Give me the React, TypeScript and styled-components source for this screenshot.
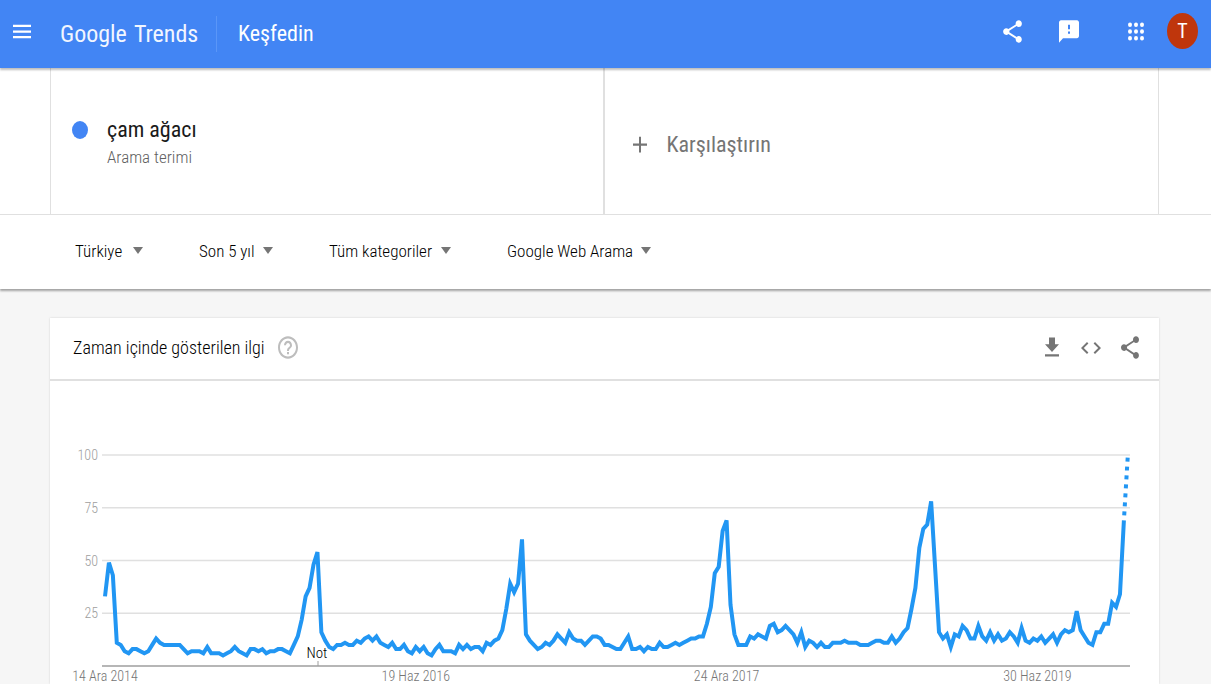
import React from "react";
import styled, { createGlobalStyle } from "styled-components";

const GlobalStyle = createGlobalStyle`
  *, *::before, *::after { box-sizing: border-box; }
  html { background: #f6f6f6; }
  body {
    margin: 0;
    color: #1a1a1a;
    font-family: "Roboto Condensed", Roboto, "Liberation Sans", sans-serif;
  }
`;

const Header = styled.header`
  position: relative;
  display: flex;
  align-items: center;
  height: 68px;
  padding: 0 13px 6px 10px;
  background: #4285f4;
  color: #fff;
  box-shadow: 0 2px 2px rgba(0, 0, 0, 0.26);
`;

const IconButton = styled.button`
  display: flex;
  padding: 0;
  border: 0;
  background: none;
  color: inherit;
  cursor: pointer;
`;

const Logo = styled.a`
  display: flex;
  gap: 7px;
  width: 157px;
  height: 36px;
  margin: 6px 0 0 26px;
  border-right: 1px solid #5a96f8;
  color: #f1f6ff;
  font-size: 24px;
  line-height: 36px;
  text-decoration: none;
  white-space: nowrap;
`;

const PageTitle = styled.h1`
  margin: 6px auto 0 21px;
  font-size: 22px;
  font-weight: 400;
  line-height: 36px;
`;

const HeaderActions = styled.div`
  display: flex;
  align-items: center;
  gap: 32px;
`;

const Account = styled.div`
  display: flex;
  align-items: center;
  gap: 19px;
  margin-left: 11px;
`;

const Avatar = styled.button`
  width: 31px;
  height: 36px;
  padding: 0;
  border: 0;
  border-radius: 50%;
  background: #bf360c;
  color: #fff;
  font: inherit;
  font-size: 20px;
`;

const Terms = styled.section`
  display: grid;
  grid-template-columns: calc(50% - 2px) 1fr;
  height: 147px;
  padding: 0 52px 0 50px;
  border-bottom: 1px solid #e0e0e0;
  background: #fff;
`;

const Term = styled.div`
  display: flex;
  align-items: flex-start;
  gap: 19px;
  padding: 48px 21px;
  border-left: 1px solid #e0e0e0;
`;

const TermDot = styled.span`
  width: 16px;
  height: 18px;
  margin-top: 5px;
  border-radius: 50%;
  background: #4285f4;
`;

const TermName = styled.div`
  font-size: 22px;
  line-height: 28px;
`;

const TermKind = styled.div`
  color: #616161;
  font-size: 17px;
  font-weight: 300;
  line-height: 26px;
`;

const Compare = styled.button`
  display: flex;
  align-items: center;
  gap: 15px;
  padding: 3px 23px 0;
  border: solid #e0e0e0;
  border-width: 0 1px 0 2px;
  background: none;
  color: #757575;
  font: inherit;
  font-size: 22px;
  cursor: pointer;
`;

const Filters = styled.section`
  position: relative;
  display: flex;
  align-items: center;
  gap: 56px;
  height: 74px;
  padding: 0 75px 3px;
  background: #fff;
  box-shadow: 0 2px 2px rgba(0, 0, 0, 0.34);
`;

const Filter = styled.label`
  display: flex;
  align-items: center;
`;

const FilterSelect = styled.select<{ $width: number }>`
  width: ${(p) => p.$width}px;
  padding: 0;
  border: 0;
  appearance: none;
  background: none;
  color: #000;
  font: inherit;
  font-size: 17px;
  font-weight: 300;
  line-height: 24px;
`;

const Arrow = styled.span`
  border: solid transparent;
  border-width: 7px 5px 0;
  border-top-color: #757575;
`;

const Card = styled.main`
  margin: 29px 52px 0 50px;
  background: #fff;
  box-shadow: 0 0 2px rgba(0, 0, 0, 0.15);
`;

const CardHeader = styled.div`
  display: flex;
  align-items: center;
  height: 63px;
  padding: 0 17px 2px 23px;
  border-bottom: 2px solid #e0e0e0;
  color: #757575;
`;

const CardTitle = styled.h2`
  margin: 0 11px 0 0;
  color: #000;
  font-size: 18px;
  font-weight: 300;
`;

const HelpButton = styled(IconButton)`
  margin-right: auto;
  color: #bdbdbd;
`;

const CardActions = styled.div`
  display: flex;
  align-items: center;
  gap: 15px;
`;

const Chart = styled.svg`
  display: block;
  width: 100%;
  height: auto;
  font-size: 14px;
  font-weight: 300;
`;

function Icon({ d, w = 24, h = 27 }: { d: string; w?: number; h?: number }) {
  return (
    <svg width={w} height={h} viewBox="0 0 24 24" preserveAspectRatio="none" fill="currentColor" aria-hidden="true">
      <path d={d} />
    </svg>
  );
}

const icons = {
  menu: "M3 18h18v-2H3v2zm0-5h18v-2H3v2zm0-7v2h18V6H3z",
  share:
    "M18 16.08c-.76 0-1.44.3-1.96.77L8.91 12.7c.05-.23.09-.46.09-.7s-.04-.47-.09-.7l7.05-4.11c.54.5 1.25.81 2.04.81 1.66 0 3-1.34 3-3s-1.34-3-3-3-3 1.34-3 3c0 .24.04.47.09.7L8.04 9.81C7.5 9.31 6.79 9 6 9c-1.66 0-3 1.34-3 3s1.34 3 3 3c.79 0 1.5-.31 2.04-.81l7.12 4.16c-.05.21-.08.43-.08.65 0 1.61 1.31 2.92 2.92 2.92s2.92-1.31 2.92-2.92-1.31-2.92-2.92-2.92z",
  feedback:
    "M20 2H4c-1.1 0-1.99.9-1.99 2L2 22l4-4h14c1.1 0 2-.9 2-2V4c0-1.1-.9-2-2-2zm-7 12h-2v-2h2v2zm0-4h-2V6h2v4z",
  apps:
    "M4 6a2 2 0 1 0 4 0a2 2 0 1 0-4 0M10 6a2 2 0 1 0 4 0a2 2 0 1 0-4 0M16 6a2 2 0 1 0 4 0a2 2 0 1 0-4 0M4 12a2 2 0 1 0 4 0a2 2 0 1 0-4 0M10 12a2 2 0 1 0 4 0a2 2 0 1 0-4 0M16 12a2 2 0 1 0 4 0a2 2 0 1 0-4 0M4 18a2 2 0 1 0 4 0a2 2 0 1 0-4 0M10 18a2 2 0 1 0 4 0a2 2 0 1 0-4 0M16 18a2 2 0 1 0 4 0a2 2 0 1 0-4 0",
  add: "M19 13h-6v6h-2v-6H5v-2h6V5h2v6h6v2z",
  help:
    "M11 18h2v-2h-2v2zm1-16C6.48 2 2 6.48 2 12s4.48 10 10 10 10-4.48 10-10S17.52 2 12 2zm0 18c-4.41 0-8-3.59-8-8s3.59-8 8-8 8 3.59 8 8-3.59 8-8 8zm0-14c-2.21 0-4 1.79-4 4h2c0-1.1.9-2 2-2s2 .9 2 2c0 2-3 1.75-3 5h2c0-2.25 3-2.5 3-5 0-2.21-1.79-4-4-4z",
  download: "M19 9h-4V3H9v6H5l7 7 7-7zM5 18v2h14v-2H5z",
  code: "M9.4 16.6L4.8 12l4.6-4.6L8 6l-6 6 6 6 1.4-1.4zm5.2 0l4.6-4.6-4.6-4.6L16 6l6 6-6 6-1.4-1.4z",
};

const filters = [
  { label: "Konum", value: "Türkiye", width: 58 },
  { label: "Zaman aralığı", value: "Son 5 yıl", width: 64 },
  { label: "Kategori", value: "Tüm kategoriler", width: 112 },
  { label: "Arama türü", value: "Google Web Arama", width: 134 },
];

// Weekly interest, starting 14 December 2014
const weekly = [
  33, 49, 43, 11, 10, 7, 6, 8, 8, 7, 6, 7, 10, 13, 11, 10, 10, 10, 10, 10,
  8, 6, 7, 7, 7, 6, 9, 6, 6, 6, 5, 6, 7, 9, 7, 6, 5, 8, 8, 7,
  8, 6, 7, 7, 8, 8, 7, 6, 10, 14, 22, 33, 37, 48, 54, 16, 12, 9, 8, 10,
  10, 11, 10, 10, 12, 11, 13, 14, 12, 14, 11, 10, 9, 11, 8, 8, 10, 7, 6, 9,
  7, 9, 6, 5, 8, 10, 7, 7, 7, 6, 10, 8, 10, 8, 9, 9, 7, 11, 10, 12,
  13, 17, 27, 39, 35, 39, 60, 15, 12, 10, 8, 9, 11, 10, 12, 15, 13, 11, 16, 13,
  12, 12, 10, 12, 14, 14, 13, 10, 10, 9, 8, 8, 11, 14, 8, 8, 9, 7, 9, 8,
  8, 11, 9, 9, 10, 11, 10, 11, 12, 13, 13, 14, 14, 20, 28, 44, 47, 64, 69, 29,
  15, 10, 10, 10, 14, 13, 15, 14, 13, 19, 20, 16, 17, 19, 17, 15, 11, 16, 9, 12,
  11, 9, 11, 9, 9, 11, 11, 11, 12, 11, 11, 11, 10, 10, 10, 11, 12, 12, 11, 11,
  14, 11, 13, 16, 18, 27, 37, 56, 65, 67, 78, 47, 16, 13, 15, 9, 15, 14, 19, 17,
  13, 13, 19, 14, 12, 16, 12, 15, 12, 13, 16, 14, 11, 18, 12, 11, 13, 12, 14, 11,
  13, 15, 11, 15, 17, 16, 17, 26, 17, 14, 11, 10, 16, 16, 20, 20, 30, 28, 34, 69,
];

const xAt = (week: number) => 55 + week * 3.934;
const yAt = (value: number) => 285 - value * 2.11;
const points = weekly.map((v, i) => `${xAt(i)},${yAt(v)}`).join(" ");
const last = weekly.length - 1;

const dates = [
  { week: 0, text: "14 Ara 2014" },
  { week: 79, text: "19 Haz 2016" },
  { week: 158, text: "24 Ara 2017" },
  { week: 237, text: "30 Haz 2019" },
];

function InterestChart() {
  return (
    <Chart viewBox="0 0 1109 303" role="img" aria-label="Zaman içinde gösterilen ilgi">
      {[25, 50, 75, 100].map((v) => (
        <g key={v}>
          <line x1="52" x2="1080" y1={yAt(v)} y2={yAt(v)} stroke="#e0e0e0" strokeWidth="1.4" />
          <text x="48" y={yAt(v) + 5} textAnchor="end" fill="#9e9e9e">{v}</text>
        </g>
      ))}
      <line x1="52" x2="1080" y1="285" y2="285" stroke="#9e9e9e" strokeWidth="1.4" />
      <line x1="268" x2="268" y1="280" y2="285" stroke="#9e9e9e" />
      <polyline points={points} fill="none" stroke="#2196f3" strokeWidth="4" />
      <line
        x1={xAt(last)}
        y1={yAt(weekly[last])}
        x2={xAt(last + 1)}
        y2={yAt(100)}
        stroke="#2196f3"
        strokeWidth="4"
        strokeDasharray="4 5"
        strokeDashoffset="4"
      />
      <text x="267" y="277" textAnchor="middle" fill="#000" fontSize="15">Not</text>
      {dates.map((d) => (
        <text key={d.week} x={xAt(d.week)} y="300" textAnchor="middle" fill="#757575">{d.text}</text>
      ))}
    </Chart>
  );
}

export default function App() {
  return (
    <>
      <GlobalStyle />
      <Header>
        <IconButton aria-label="Menü"><Icon d={icons.menu} /></IconButton>
        <Logo href="#"><span>Google</span><span>Trends</span></Logo>
        <PageTitle>Keşfedin</PageTitle>
        <HeaderActions>
          <IconButton aria-label="Paylaş"><Icon d={icons.share} w={25} /></IconButton>
          <IconButton aria-label="Geri bildirim"><Icon d={icons.feedback} /></IconButton>
          <Account>
            <IconButton aria-label="Uygulamalar"><Icon d={icons.apps} /></IconButton>
            <Avatar aria-label="Hesap">T</Avatar>
          </Account>
        </HeaderActions>
      </Header>
      <Terms>
        <Term>
          <TermDot />
          <div>
            <TermName>çam ağacı</TermName>
            <TermKind>Arama terimi</TermKind>
          </div>
        </Term>
        <Compare><Icon d={icons.add} />Karşılaştırın</Compare>
      </Terms>
      <Filters>
        {filters.map((f) => (
          <Filter key={f.label}>
            <FilterSelect $width={f.width} aria-label={f.label}>
              <option>{f.value}</option>
            </FilterSelect>
            <Arrow />
          </Filter>
        ))}
      </Filters>
      <Card>
        <CardHeader>
          <CardTitle>Zaman içinde gösterilen ilgi</CardTitle>
          <HelpButton aria-label="Yardım"><Icon d={icons.help} /></HelpButton>
          <CardActions>
            <IconButton aria-label="İndir"><Icon d={icons.download} /></IconButton>
            <IconButton aria-label="Yerleştir"><Icon d={icons.code} h={24} /></IconButton>
            <IconButton aria-label="Paylaş"><Icon d={icons.share} /></IconButton>
          </CardActions>
        </CardHeader>
        <InterestChart />
      </Card>
    </>
  );
}
